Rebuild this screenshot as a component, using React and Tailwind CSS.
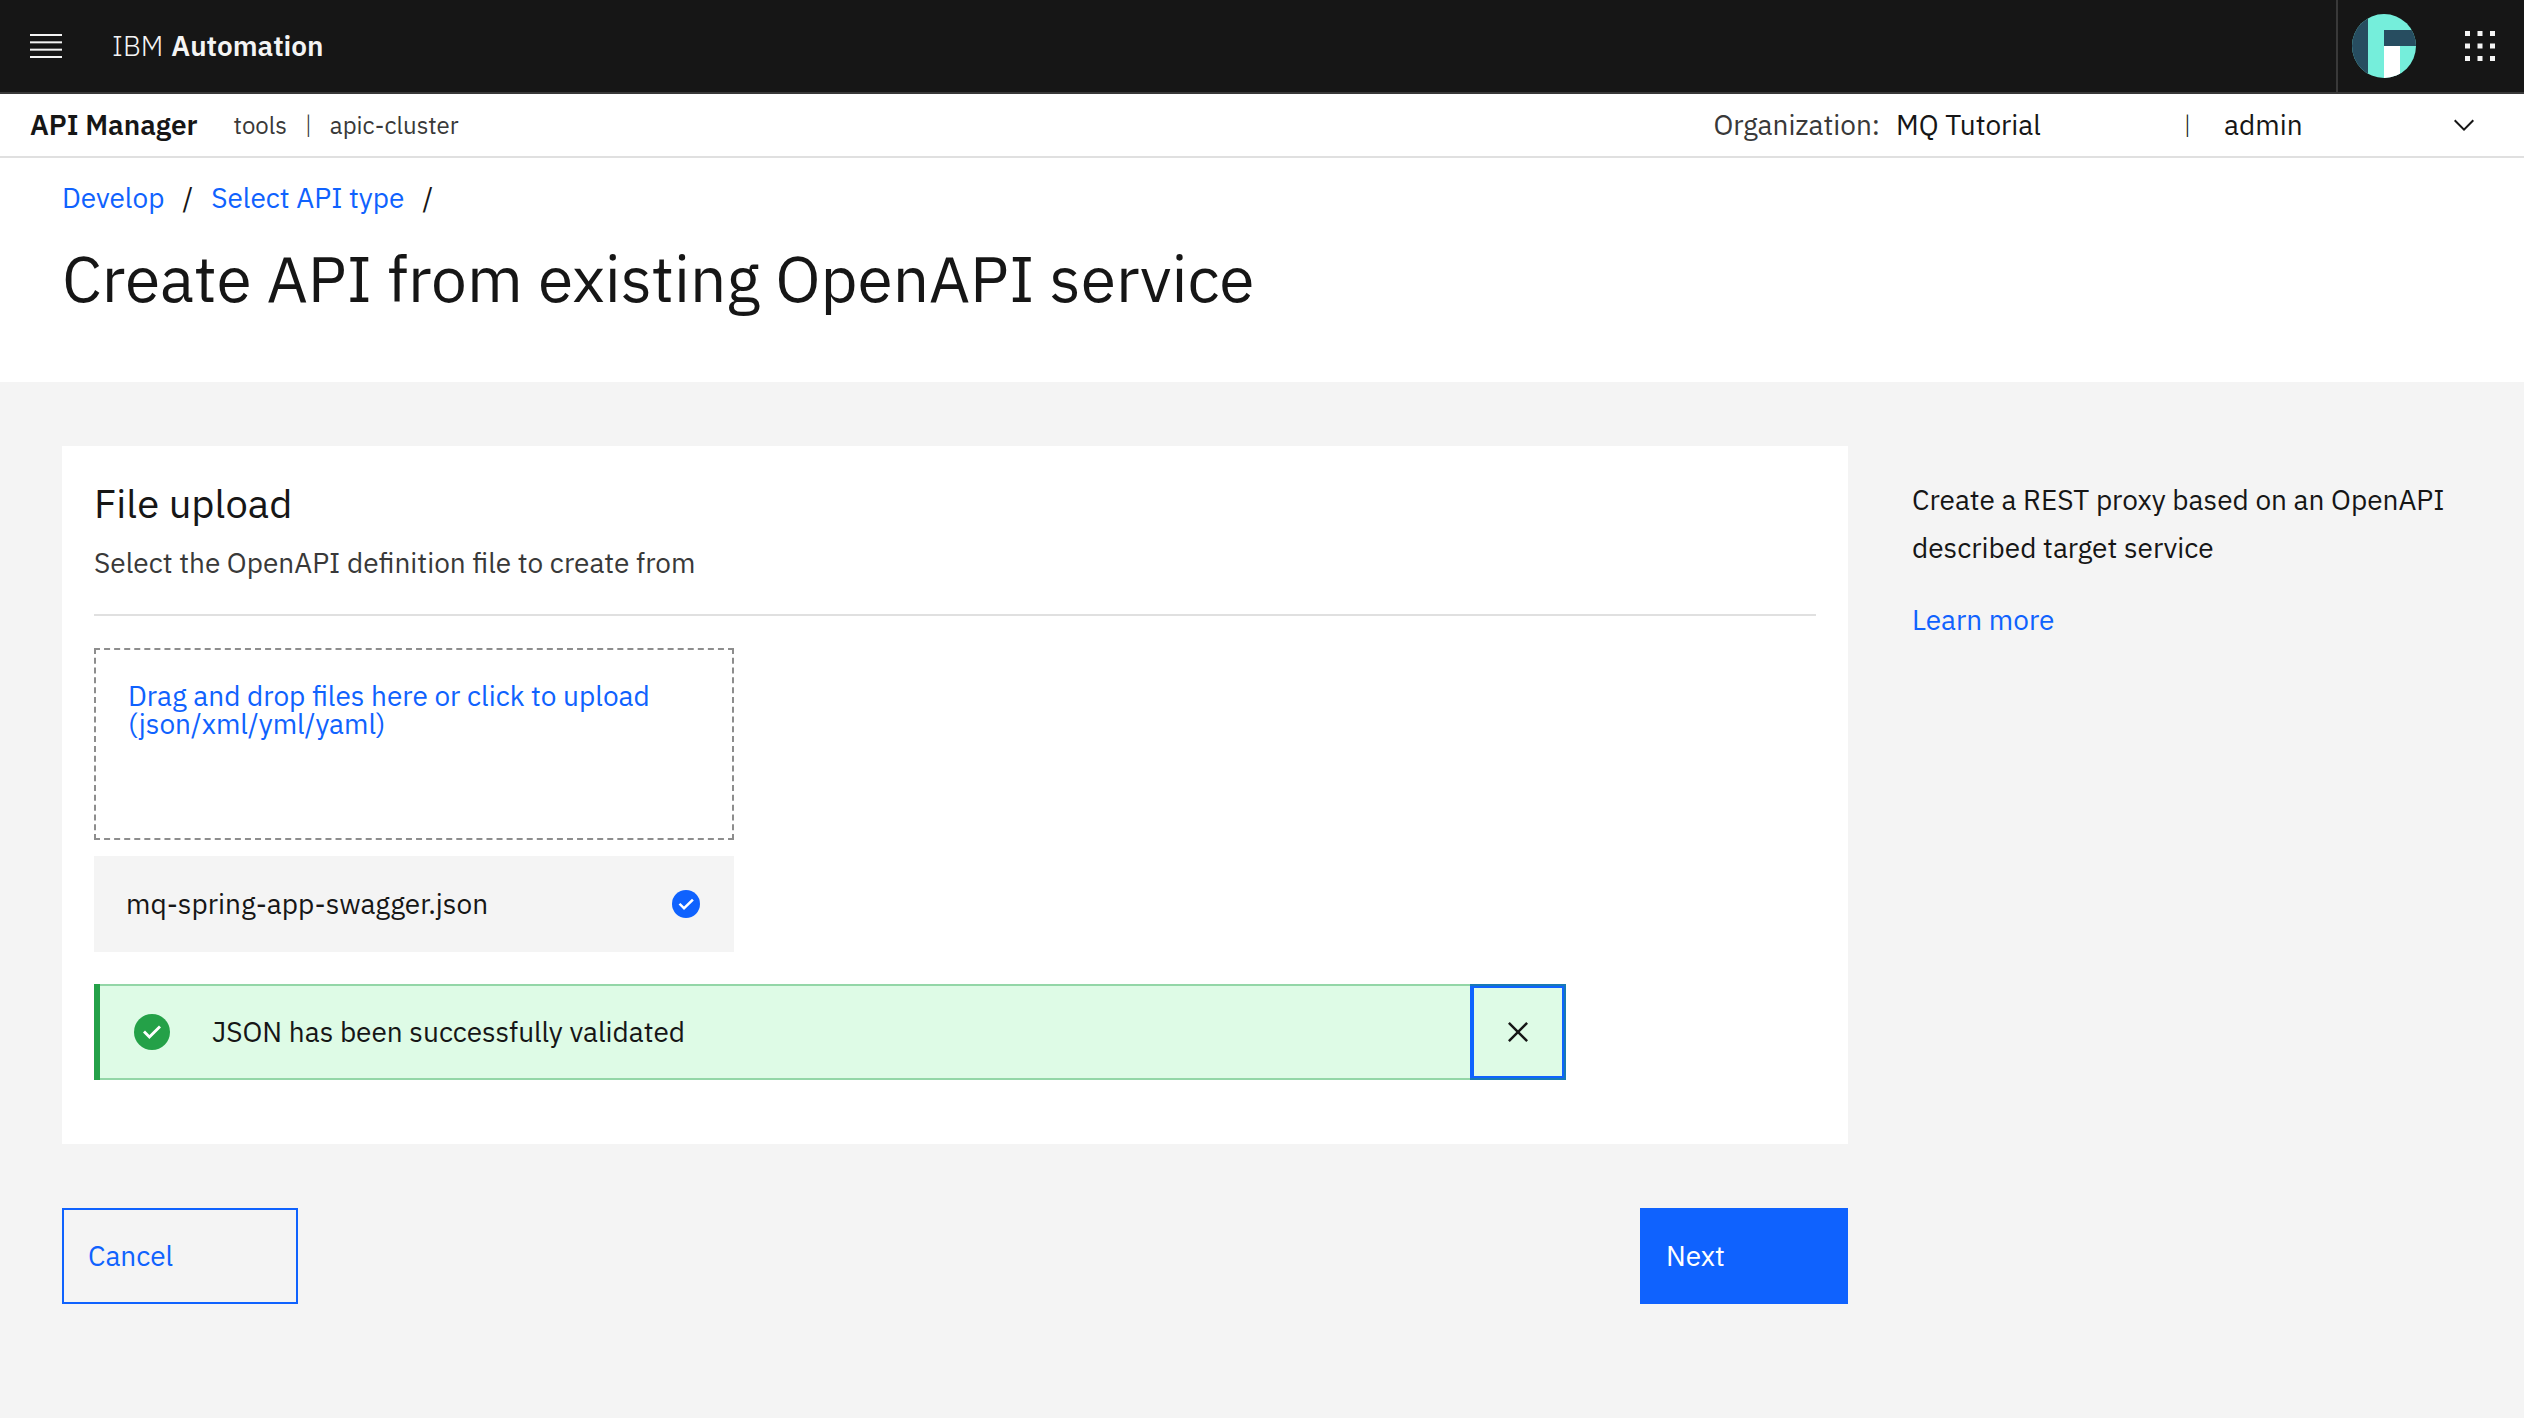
function MenuIcon() {
  return (
    <svg className="h-10 w-10" viewBox="0 0 40 40" fill="currentColor" aria-hidden="true">
      <rect x="4" y="8" width="32" height="2" />
      <rect x="4" y="15.33" width="32" height="2" />
      <rect x="4" y="22.67" width="32" height="2" />
      <rect x="4" y="30" width="32" height="2" />
    </svg>
  );
}

function Avatar() {
  return (
    <svg className="h-16 w-16" viewBox="0 0 64 64" aria-hidden="true">
      <clipPath id="avatar-circle">
        <circle cx="32" cy="32" r="32" />
      </clipPath>
      <g clipPath="url(#avatar-circle)">
        <rect width="64" height="64" fill="#75eedb" />
        <rect width="16" height="64" fill="#274d60" />
        <rect x="32" y="16" width="32" height="16" fill="#274d60" />
        <rect x="32" y="32" width="16" height="32" fill="#ffffff" />
      </g>
    </svg>
  );
}

function SwitcherIcon() {
  const steps = [4, 14, 24];
  return (
    <svg className="h-10 w-10" viewBox="0 0 32 32" fill="currentColor" aria-hidden="true">
      {steps.map((y) =>
        steps.map((x) => <rect key={`${x}-${y}`} x={x} y={y} width="4" height="4" />)
      )}
    </svg>
  );
}

function ChevronDown() {
  return (
    <svg className="pointer-events-none absolute right-0 h-8 w-8" viewBox="0 0 16 16" fill="currentColor" aria-hidden="true">
      <path d="M8 11 3 6l.7-.7L8 9.6l4.3-4.3.7.7z" />
    </svg>
  );
}

function CloseIcon() {
  return (
    <svg className="h-10 w-10" viewBox="0 0 32 32" fill="currentColor" aria-hidden="true">
      <path d="M24 9.4 22.6 8 16 14.6 9.4 8 8 9.4l6.6 6.6L8 22.6 9.4 24l6.6-6.6 6.6 6.6 1.4-1.4-6.6-6.6z" />
    </svg>
  );
}

export default function App() {
  return (
    <div className="flex min-h-screen flex-col bg-[#f4f4f4] font-['IBM_Plex_Sans','Noto_Sans',sans-serif] text-[28px] text-[#161616]">
      <header className="flex h-[94px] items-stretch border-b-2 border-[#393939] bg-[#161616] text-[#f4f4f4]">
        <button type="button" aria-label="Open menu" className="pl-[26px]">
          <MenuIcon />
        </button>
        <a href="#home" className="ml-[46px] flex items-center gap-2">
          <span className="font-light">IBM</span>
          <span className="font-semibold">Automation</span>
        </a>
        <div className="ml-auto flex items-center border-l-2 border-[#393939] pr-6 pl-[14px]">
          <button type="button" aria-label="Account">
            <Avatar />
          </button>
          <button type="button" aria-label="App switcher" className="ml-11">
            <SwitcherIcon />
          </button>
        </div>
      </header>

      <div className="flex h-16 items-center border-b-2 border-[#e0e0e0] bg-white">
        <span className="pl-[30px] font-semibold">API Manager</span>
        <div className="ml-9 flex items-center gap-[18px] text-2xl text-[#393939]">
          <span>tools</span>
          <span className="font-light">|</span>
          <span>apic-cluster</span>
        </div>
        <div className="ml-auto flex items-center pr-11">
          <label htmlFor="organization" className="mr-4 text-[#393939]">
            Organization:
          </label>
          <select id="organization" className="w-72 appearance-none bg-transparent">
            <option>MQ Tutorial</option>
          </select>
          <span className="w-10 text-2xl font-light">|</span>
          <div className="relative flex w-64 items-center">
            <select aria-label="Role" className="w-full appearance-none bg-transparent">
              <option>admin</option>
            </select>
            <ChevronDown />
          </div>
        </div>
      </div>

      <div className="bg-white px-[62px] pt-5 pb-[68px]">
        <nav aria-label="Breadcrumb" className="flex gap-[18px] leading-10">
          <a href="#develop" className="text-[#0f62fe]">Develop</a>
          <span>/</span>
          <a href="#select-api-type" className="text-[#0f62fe]">Select API type</a>
          <span>/</span>
        </nav>
        <h1 className="mt-6 text-[64px] leading-[72px]">Create API from existing OpenAPI service</h1>
      </div>

      <main className="grid grid-cols-[1786fr_550fr] gap-16 px-[62px] pt-16 pb-16">
        <div>
          <section className="bg-white px-8 pt-8 pb-16">
            <div className="border-b-2 border-[#e0e0e0] pb-[30px]">
              <h2 className="text-[40px] leading-[50px]">File upload</h2>
              <p className="mt-[14px] leading-[42px] text-[#393939]">
                Select the OpenAPI definition file to create from
              </p>
            </div>

            <label
              htmlFor="definition-file"
              className="relative mt-8 block h-48 max-w-[640px] cursor-pointer border-2 border-dashed border-[#8d8d8d] p-8 leading-7 text-[#0f62fe]"
            >
              Drag and drop files here or click to upload (json/xml/yml/yaml)
              <input id="definition-file" type="file" accept=".json,.xml,.yml,.yaml" className="sr-only" />
            </label>

            <div className="mt-4 flex h-24 max-w-[640px] items-center justify-between bg-[#f4f4f4] px-8">
              <span>mq-spring-app-swagger.json</span>
              <svg className="h-8 w-8" viewBox="0 0 16 16" aria-label="Uploaded" role="img">
                <circle cx="8" cy="8" r="7" fill="#0f62fe" />
                <path d="M7 11 4.3 8.3l.9-.8L7 9.3l4-3.9.9.8z" fill="#ffffff" />
              </svg>
            </div>

            <div
              role="status"
              className="relative mt-8 flex h-24 max-w-[1472px] items-center border-l-6 border-[#24a148] bg-[#defbe6] after:pointer-events-none after:absolute after:inset-0 after:border-2 after:border-l-0 after:border-[#24a148]/40"
            >
              <svg className="ml-8 h-10 w-10" viewBox="0 0 20 20" aria-hidden="true">
                <circle cx="10" cy="10" r="9" fill="#24a148" />
                <path d="m8.7 13.5-3.2-3.2 1-1 2.2 2.2 4.8-4.8 1 1z" fill="#ffffff" />
              </svg>
              <p className="ml-10">JSON has been successfully validated</p>
              <button
                type="button"
                aria-label="Close notification"
                className="ml-auto flex h-24 w-24 items-center justify-center border-4 border-[#0f62fe]"
              >
                <CloseIcon />
              </button>
            </div>
          </section>

          <div className="mt-16 flex justify-between">
            <button type="button" className="h-24 w-[236px] border-2 border-[#0f62fe] px-6 text-left text-[#0f62fe]">
              Cancel
            </button>
            <button type="button" className="h-24 w-52 border-2 border-[#0f62fe] bg-[#0f62fe] px-6 text-left text-white">
              Next
            </button>
          </div>
        </div>

        <aside className="pt-[30px] leading-[48px]">
          <p>Create a REST proxy based on an OpenAPI described target service</p>
          <a href="#learn-more" className="mt-6 inline-block text-[#0f62fe]">Learn more</a>
        </aside>
      </main>
    </div>
  );
}
